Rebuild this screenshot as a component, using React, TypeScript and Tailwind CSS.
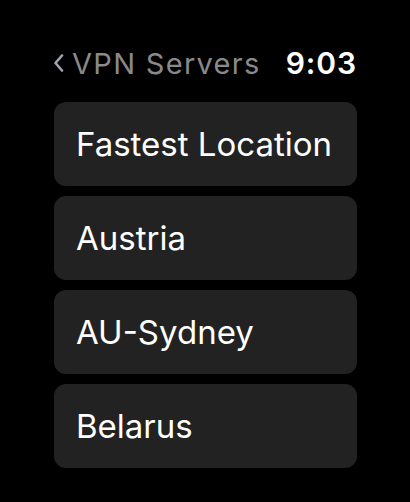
const servers = ["Fastest Location", "Austria", "AU-Sydney", "Belarus"];

export default function App() {
  return (
    <div
      className="w-[410px] h-[502px] bg-black overflow-hidden pl-[54px] pr-[53px]"
      style={{ fontFamily: "Inter, 'Noto Sans', sans-serif" }}
    >
      <header className="flex items-center justify-between h-[102px] pt-[24px]">
        <div className="flex items-center text-[#8a8a8a] text-[29px] tracking-[0.045em] leading-none -ml-[1px]">
          <svg width="11" height="18" viewBox="0 0 11 18" className="mr-[8px]">
            <path
              d="M9 1.5 L2.5 9 L9 16.5"
              fill="none"
              stroke="#9ea3ad"
              strokeWidth="2.6"
              strokeLinecap="round"
              strokeLinejoin="round"
            />
          </svg>
          <span>VPN Servers</span>
        </div>
        <span className="text-white text-[30px] font-semibold tracking-[0.03em] leading-none">9:03</span>
      </header>
      <ul className="flex flex-col gap-[10px]">
        {servers.map((name) => (
          <li
            key={name}
            className="h-[84px] rounded-[12px] bg-[#222222] flex items-center pl-[22px] text-white text-[33px] leading-none"
          >
            {name}
          </li>
        ))}
      </ul>
    </div>
  );
}
